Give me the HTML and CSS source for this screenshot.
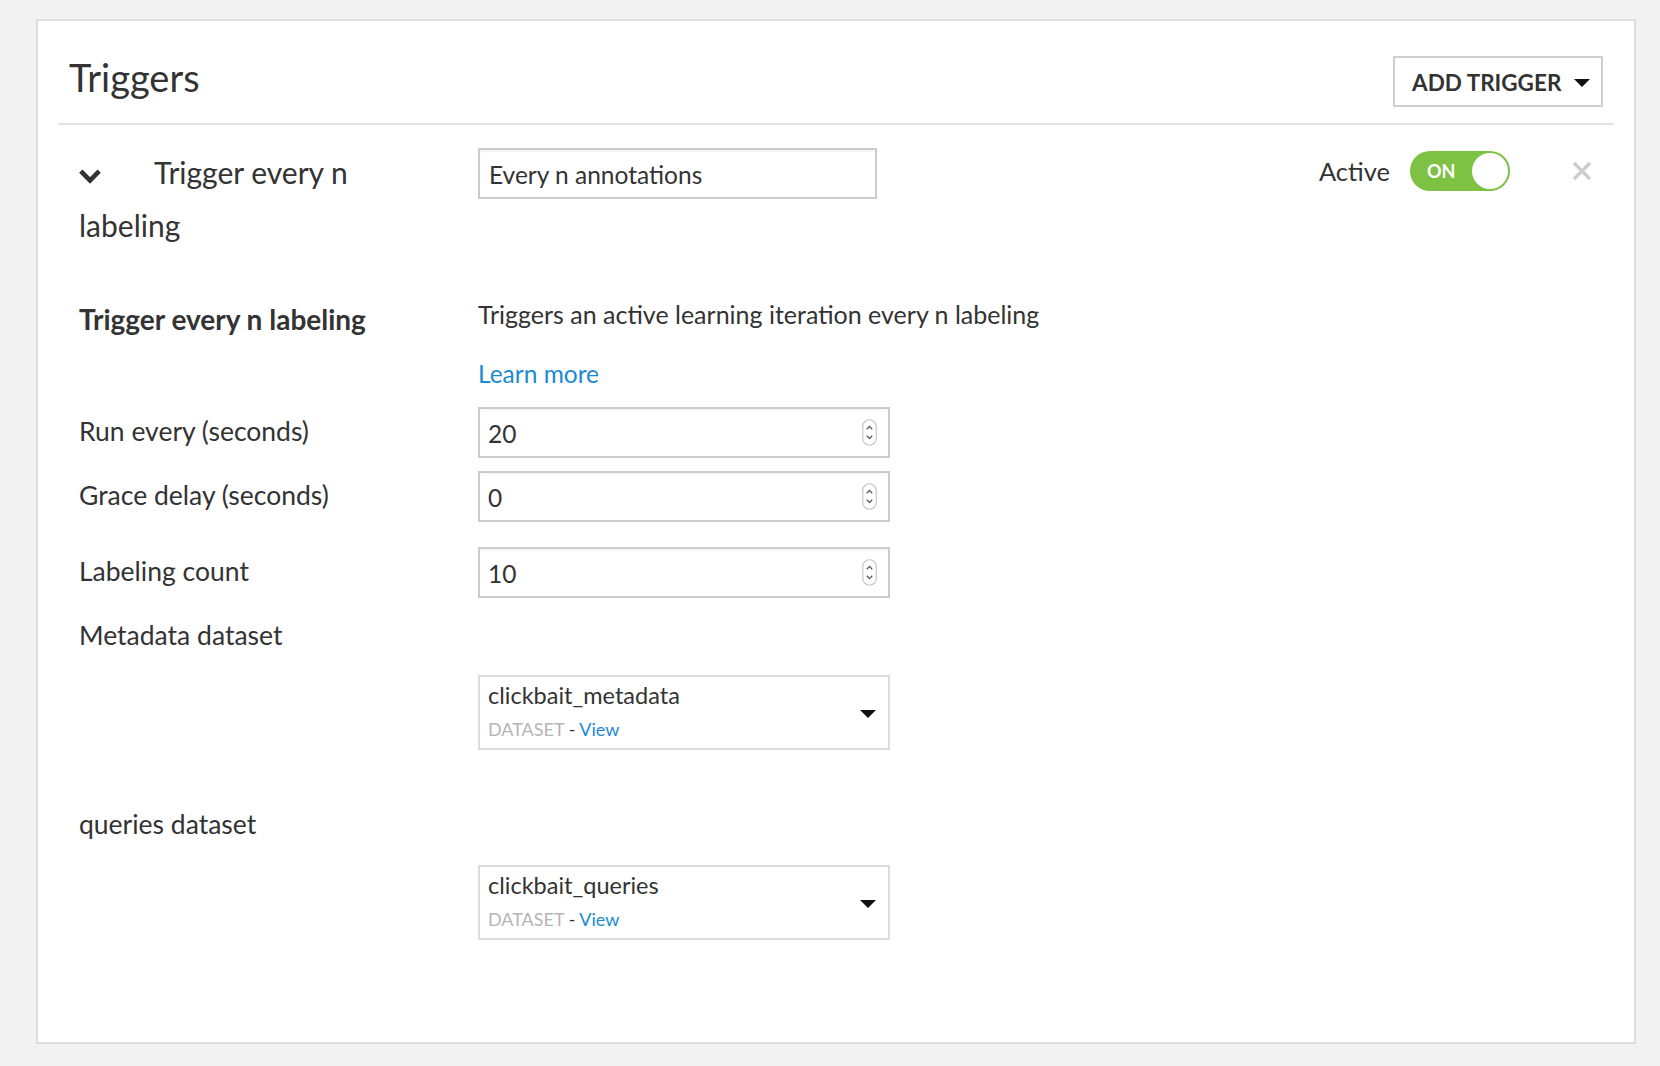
FILE: index.html
```html
<!DOCTYPE html>
<html>
<head>
<meta charset="utf-8">
<link rel="stylesheet" href="styles.css">
</head>
<body>
<div class="card">
  <div class="card-header">
    <h2 class="title">Triggers</h2>
    <button class="add-btn">ADD TRIGGER<span class="caret-down"></span></button>
  </div>
  <div class="divider"></div>
  <div class="trigger">
    <div class="trigger-head">
      <div class="trigger-name"><svg class="chevron" width="24" height="16" viewBox="0 0 24 16"><path d="M2.8 3.2 L12 12.4 L21.2 3.2" fill="none" stroke="#333" stroke-width="4.6" stroke-linejoin="miter"/></svg>Trigger every n labeling</div>
      <div class="text-input name-input">Every n annotations</div>
      <div class="trigger-actions">
        <span class="active-label">Active</span>
        <div class="toggle"><span class="toggle-text">ON</span><span class="knob"></span></div>
        <svg class="close" width="20" height="20" viewBox="0 0 20 20"><path d="M2 2 L18 18 M18 2 L2 18" stroke="#cccccc" stroke-width="3.2"/></svg>
      </div>
    </div>

    <div class="row desc-row">
      <div class="label bold">Trigger every n labeling</div>
      <div class="control">
        <p class="desc-text">Triggers an active learning iteration every n labeling</p>
        <a class="learn-more">Learn more</a>
      </div>
    </div>

    <div class="row field-row first">
      <div class="label field-label">Run every (seconds)</div>
      <div class="num-input"><span class="num-value">20</span><svg class="spinner" width="15" height="27" viewBox="0 0 15 27"><rect x="0.75" y="0.75" width="13.5" height="25.5" rx="6.75" fill="#fff" stroke="#c6c6c6" stroke-width="1.2"/><path d="M4.8 10.2 L7.5 7.4 L10.2 10.2" fill="none" stroke="#555" stroke-width="1.3"/><path d="M4.8 16.8 L7.5 19.6 L10.2 16.8" fill="none" stroke="#555" stroke-width="1.3"/></svg></div>
    </div>
    <div class="row field-row second">
      <div class="label field-label">Grace delay (seconds)</div>
      <div class="num-input"><span class="num-value">0</span><svg class="spinner" width="15" height="27" viewBox="0 0 15 27"><rect x="0.75" y="0.75" width="13.5" height="25.5" rx="6.75" fill="#fff" stroke="#c6c6c6" stroke-width="1.2"/><path d="M4.8 10.2 L7.5 7.4 L10.2 10.2" fill="none" stroke="#555" stroke-width="1.3"/><path d="M4.8 16.8 L7.5 19.6 L10.2 16.8" fill="none" stroke="#555" stroke-width="1.3"/></svg></div>
    </div>
    <div class="row field-row third">
      <div class="label field-label">Labeling count</div>
      <div class="num-input"><span class="num-value">10</span><svg class="spinner" width="15" height="27" viewBox="0 0 15 27"><rect x="0.75" y="0.75" width="13.5" height="25.5" rx="6.75" fill="#fff" stroke="#c6c6c6" stroke-width="1.2"/><path d="M4.8 10.2 L7.5 7.4 L10.2 10.2" fill="none" stroke="#555" stroke-width="1.3"/><path d="M4.8 16.8 L7.5 19.6 L10.2 16.8" fill="none" stroke="#555" stroke-width="1.3"/></svg></div>
    </div>

    <div class="label stack-label meta-label">Metadata dataset</div>
    <div class="row select-row meta-select">
      <div class="select">
        <div class="select-text">
          <div class="select-name">clickbait_metadata</div>
          <div class="select-sub"><span class="ds">DATASET</span> - <a class="view">View</a></div>
        </div>
        <span class="caret-down"></span>
      </div>
    </div>

    <div class="label stack-label queries-label">queries dataset</div>
    <div class="row select-row queries-select">
      <div class="select">
        <div class="select-text">
          <div class="select-name">clickbait_queries</div>
          <div class="select-sub"><span class="ds">DATASET</span> - <a class="view">View</a></div>
        </div>
        <span class="caret-down"></span>
      </div>
    </div>
  </div>
</div>
</body>
</html>
```

FILE: styles.css
```css
* { box-sizing: border-box; }

body {
  margin: 0;
  background: #f2f2f2;
  font-family: Lato, "Open Sans", sans-serif;
  color: #333;
}

.card {
  margin: 19px 0 0 36px;
  width: 1600px;
  height: 1025px;
  background: #fff;
  border: 2px solid #dedede;
}

.card-header {
  display: flex;
  justify-content: space-between;
  align-items: flex-start;
  padding: 35px 31px 0;
}

.title {
  margin: -2px 0 0;
  font-size: 38px;
  font-weight: 400;
  line-height: 46px;
  color: #333;
}

.add-btn {
  display: flex;
  align-items: center;
  width: 210px;
  height: 51px;
  padding: 2px 11px 0 17px;
  border: 2px solid #cfcfcf;
  background: #fff;
  font-family: Lato, sans-serif;
  font-weight: 700;
  font-size: 22.5px;
  white-space: nowrap;
  color: #333;
}

.caret-down {
  width: 0;
  height: 0;
  border-left: 8px solid transparent;
  border-right: 8px solid transparent;
  border-top: 8px solid #111;
  margin-left: auto;
}

.divider {
  margin: 16px 20px 0;
  border-top: 2px solid #e3e3e3;
}

.trigger {
  padding: 0 42px 0 41px;
}

.trigger-head {
  display: flex;
  align-items: flex-start;
  margin-top: 23px;
}

.trigger-name {
  flex: 0 0 399px;
  padding-right: 70px;
  margin-top: -2px;
  font-size: 30px;
  line-height: 53px;
}

.chevron {
  display: inline-block;
  vertical-align: 0;
  margin-left: -1px;
  margin-right: 52px;
}

.text-input {
  height: 51px;
  border: 2px solid #cbcbcb;
  padding: 0 9px;
  display: flex;
  align-items: center;
  font-size: 24.5px;
  color: #333;
  box-shadow: inset 0 2px 2px rgba(0,0,0,0.04);
}

.name-input {
  width: 399px;
  padding-top: 2px;
}

.trigger-actions {
  margin-left: auto;
  margin-top: 3px;
  height: 40px;
  display: flex;
  align-items: center;
}

.active-label {
  font-size: 25.5px;
  margin-right: 20px;
}

.toggle {
  position: relative;
  width: 100px;
  height: 40px;
  border-radius: 20px;
  background: #7dc243;
  display: flex;
  align-items: center;
}

.toggle-text {
  color: #fff;
  font-weight: 700;
  font-size: 18px;
  margin-left: 17px;
}

.knob {
  position: absolute;
  top: 2px;
  right: 2px;
  width: 36px;
  height: 36px;
  border-radius: 50%;
  background: #fff;
}

.close {
  margin-left: 62px;
}

.row {
  display: flex;
  align-items: flex-start;
}

.label {
  flex: 0 0 399px;
  font-size: 26.5px;
  line-height: 36px;
}

.label.bold {
  font-weight: 700;
  font-size: 28px;
}

.desc-row {
  margin-top: 49px;
}

.desc-text {
  margin: -5px 0 24px;
  font-size: 25px;
  line-height: 36px;
}

.learn-more {
  display: block;
  font-size: 24.5px;
  line-height: 36px;
  color: #1b8ad0;
}

.field-row.first { margin-top: 15px; }
.field-row.second { margin-top: 13px; }
.field-row.third { margin-top: 25px; }

.field-label {
  margin-top: 6px;
}

.num-input {
  width: 412px;
  height: 51px;
  border: 2px solid #cbcbcb;
  padding: 2px 11px 0 8px;
  display: flex;
  align-items: center;
  justify-content: space-between;
  font-size: 24.5px;
  box-shadow: inset 0 2px 2px rgba(0,0,0,0.04);
}

.spinner {
  margin-top: -3px;
}

.stack-label {
  display: block;
}

.meta-label { margin-top: 19px; }
.queries-label { margin-top: 56px; }

.select-row {
  padding-left: 399px;
}

.meta-select { margin-top: 22px; }
.queries-select { margin-top: 23px; }

.select {
  width: 412px;
  height: 75px;
  border: 2px solid #dcdcdc;
  padding: 3px 12px 0 8px;
  display: flex;
  align-items: center;
}

.select-text {
  align-self: flex-start;
}

.select-name {
  font-size: 23.5px;
  line-height: 30px;
}

.select-sub {
  margin-top: 6px;
  font-size: 18px;
  line-height: 26px;
  color: #333;
}

.ds {
  color: #b5b5b5;
}

.view {
  color: #1b8ad0;
}
```
